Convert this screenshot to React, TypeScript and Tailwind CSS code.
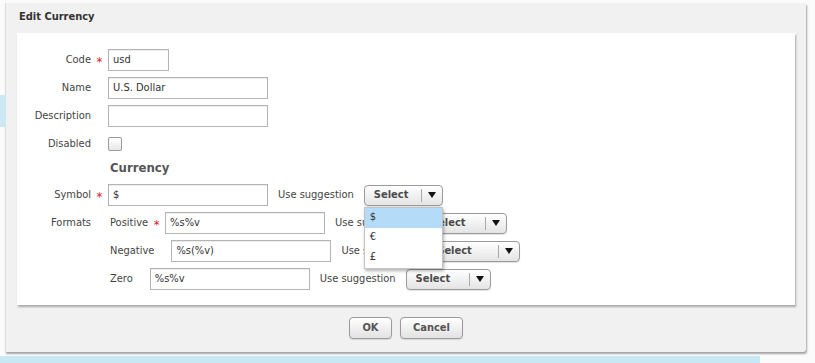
import { ReactNode } from "react";

const font = "font-['DejaVu_Sans_Condensed','DejaVu_Sans',sans-serif]";

function Star() {
  return <span className="text-[#d0262b] text-[13px] leading-none">*</span>;
}

function TextInput({ value, w = "w-[160px]" }: { value: string; w?: string }) {
  return (
    <div
      className={`${w} h-[22px] border border-[#b4b4b4] bg-white shadow-[inset_0_1px_1px_rgba(0,0,0,0.08)] pl-[4px] flex items-center text-[11px] text-[#333]`}
    >
      {value}
    </div>
  );
}

function SelectButton({ w, children }: { w: string; children?: ReactNode }) {
  return (
    <div className={`relative ${w} h-[21px]`}>
      <div className="h-full flex items-center rounded-[4px] border border-[#9a9a9a] bg-gradient-to-b from-white to-[#e4e4e4] shadow-[0_1px_1px_rgba(0,0,0,0.12)]">
        <span className="flex-1 pl-[9px] text-[11px] font-bold text-[#4a4a4a]">Select</span>
        <span className="w-px h-[13px] bg-[#a8a8a8]" />
        <span className="w-[20px] flex justify-center">
          <svg width="8" height="6" viewBox="0 0 8 6">
            <path d="M0 0h8L4 6z" fill="#111" />
          </svg>
        </span>
      </div>
      {children}
    </div>
  );
}

function Row({ label, star, children }: { label: string; star?: boolean; children: ReactNode }) {
  return (
    <div className="flex items-center h-[22px]">
      <div className="w-[74px] text-right text-[11px] text-[#444]">{label}</div>
      <div className="w-[17px] flex justify-center pt-[3px]">{star && <Star />}</div>
      {children}
    </div>
  );
}

function Suggest({ w, children }: { w: string; children?: ReactNode }) {
  return (
    <>
      <span className="ml-[10px] mr-[10px] text-[11px] text-[#444]">Use suggestion</span>
      <SelectButton w={w}>{children}</SelectButton>
    </>
  );
}

function SubRow({ label, star, value, w }: { label: string; star?: boolean; value: string; w: string }) {
  return (
    <div className="flex items-center h-[22px]">
      <span className="pl-[2px] text-[11px] text-[#444]">{label}</span>
      <span className="w-[17px] flex justify-center pt-[3px]">{star && <Star />}</span>
      <TextInput value={value} />
      <Suggest w={w} />
    </div>
  );
}

function Button({ label, w }: { label: string; w: string }) {
  return (
    <div
      className={`${w} h-[22px] rounded-[4px] border border-[#9a9a9a] bg-gradient-to-b from-white to-[#e2e2e2] shadow-[0_1px_1px_rgba(0,0,0,0.12)] flex items-center justify-center text-[11px] font-bold text-[#555]`}
    >
      {label}
    </div>
  );
}

export default function App() {
  return (
    <div className={`relative w-[815px] h-[363px] overflow-hidden bg-[#fbfbfb] ${font}`}>
      {/* page behind the dialog */}
      <div className="absolute left-0 top-[95px] w-[6px] h-[32px] bg-[#cbe8f4]" />

      <div className="pt-[3px] pl-[5px]">
        <div className="w-[801px] h-[349px] flex flex-col bg-[#f1f1f1] border-l border-[#dcdcdc] rounded-br-[3px] shadow-[1px_2px_2px_rgba(0,0,0,0.35)]">
          <div className="h-[30px] pl-[13px] pt-[6px] text-[11px] font-bold text-[#333]">Edit Currency</div>

          <div className="mx-[11px] h-[272px] bg-white shadow-[1px_2px_2px_rgba(0,0,0,0.3)] pt-[16px] flex flex-col gap-[6px]">
            <Row label="Code" star>
              <TextInput value="usd" w="w-[61px]" />
            </Row>
            <Row label="Name">
              <TextInput value="U.S. Dollar" />
            </Row>
            <Row label="Description">
              <TextInput value="" />
            </Row>
            <Row label="Disabled">
              <div className="w-[14px] h-[14px] rounded-[2px] border border-[#9a9a9a] bg-gradient-to-b from-white to-[#e8e8e8]" />
            </Row>
            <div className="h-[17px] pl-[93px] text-[13px] leading-[13px] font-bold text-[#555]">Currency</div>
            <Row label="Symbol" star>
              <TextInput value="$" />
              <Suggest w="w-[79px]">
                <div className="absolute left-0 top-[22px] w-full z-10 bg-white border border-[#c4c4c4] shadow-[1px_2px_3px_rgba(0,0,0,0.3)] text-[11px] text-[#333]">
                  <div className="h-[20px] pl-[5px] flex items-center bg-[#b4dcf9]">$</div>
                  <div className="h-[20px] pl-[5px] flex items-center">€</div>
                  <div className="h-[20px] pl-[5px] flex items-center">£</div>
                </div>
              </Suggest>
            </Row>
            <div className="flex">
              <div className="w-[74px] h-[22px] flex items-center justify-end text-[11px] text-[#444]">Formats</div>
              <div className="ml-[17px] flex flex-col gap-[6px]">
                <SubRow label="Positive" star value="%s%v" w="w-[86px]" />
                <SubRow label="Negative" value="%s(%v)" w="w-[93px]" />
                <SubRow label="Zero" value="%s%v" w="w-[85px]" />
              </div>
            </div>
          </div>

          <div className="flex-1 flex items-center justify-center gap-[8px] pb-[1px]">
            <Button label="OK" w="w-[43px]" />
            <Button label="Cancel" w="w-[63px]" />
          </div>
        </div>
      </div>

      <div className="mt-[4px] w-[760px] h-[8px] bg-[#c8e8f5]" />
    </div>
  );
}
